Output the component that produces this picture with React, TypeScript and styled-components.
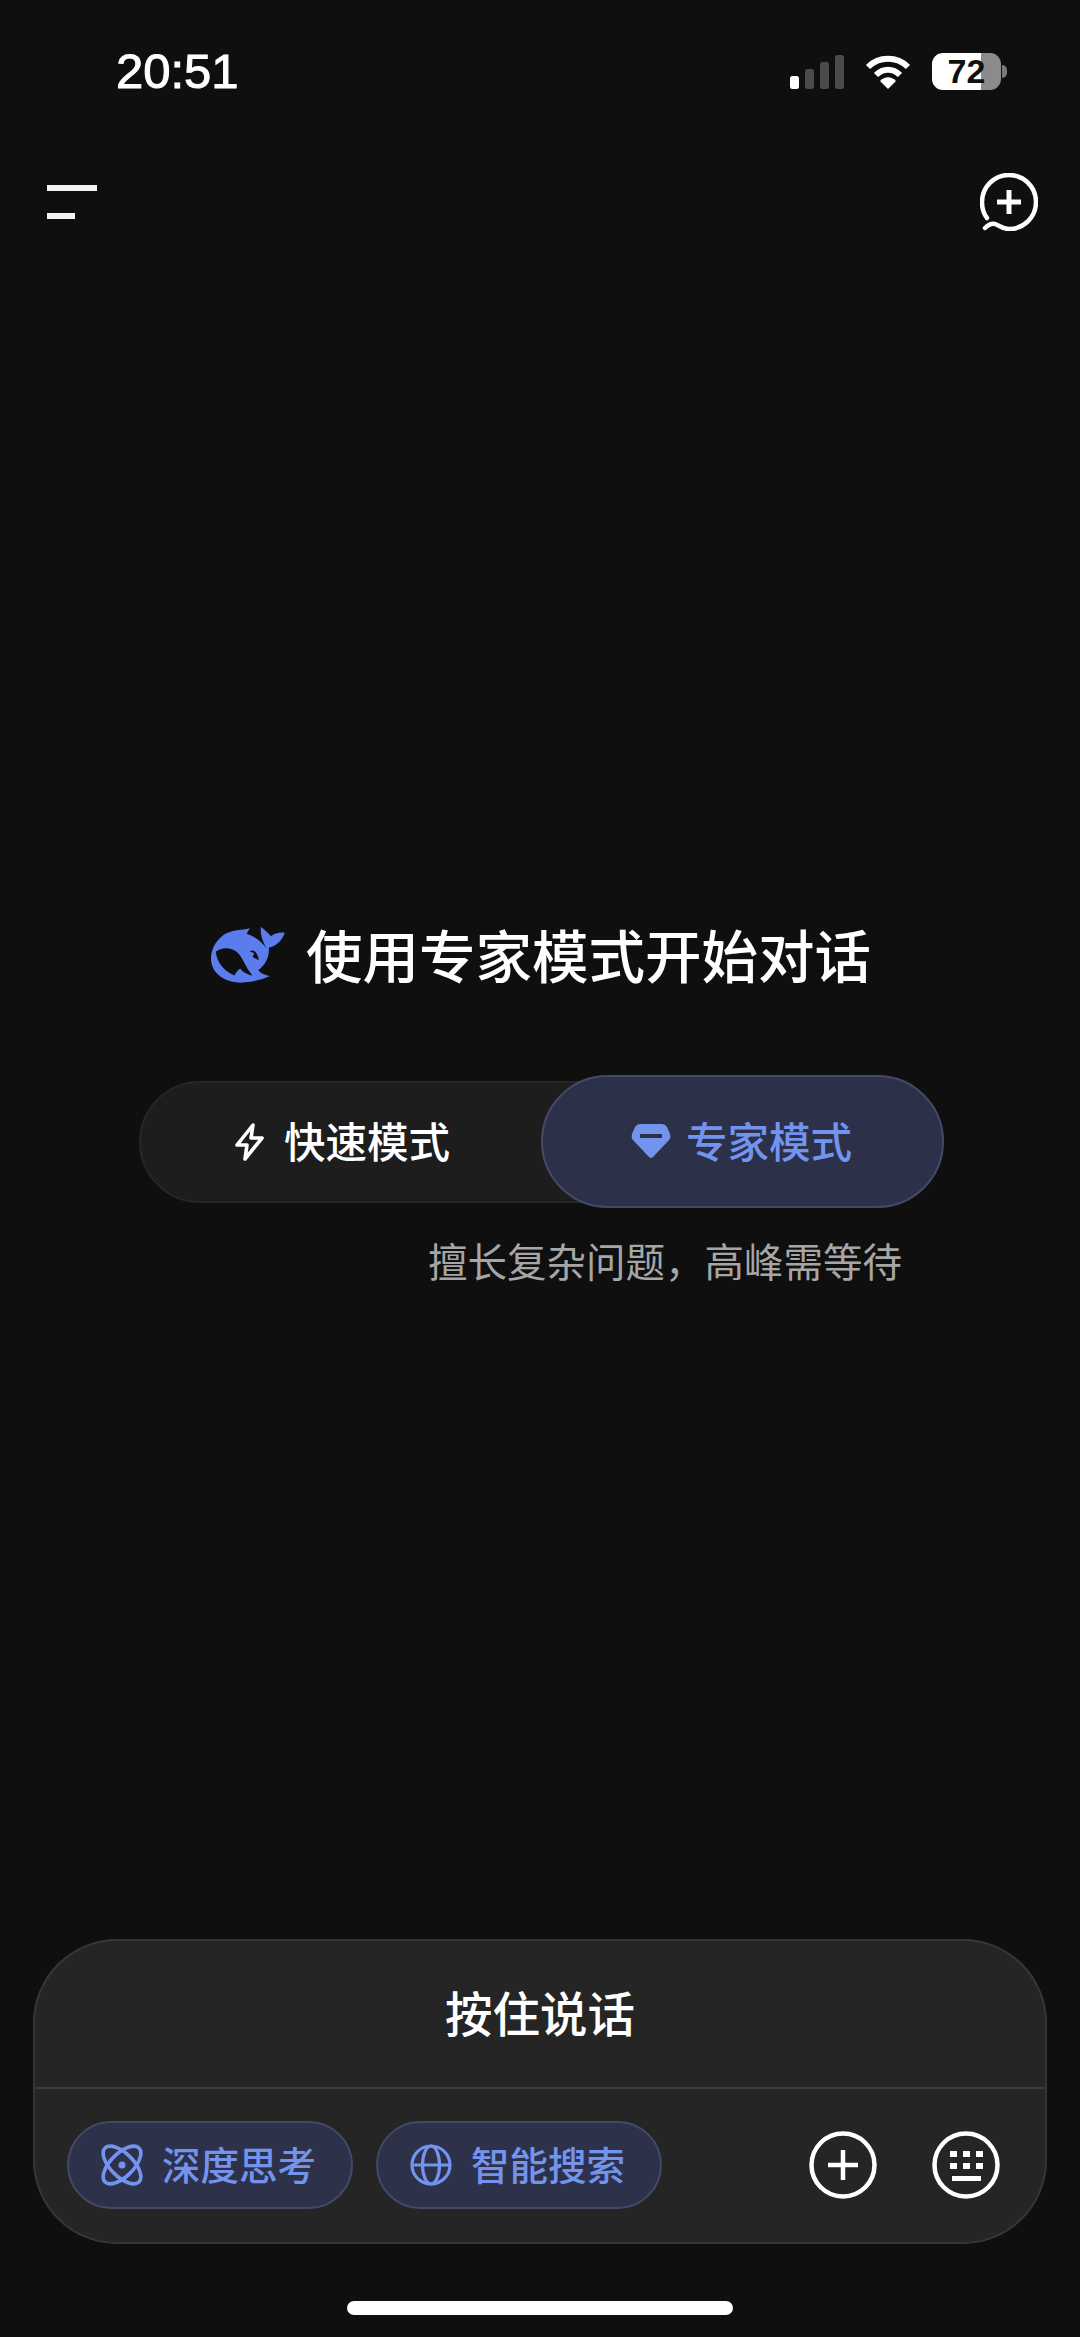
import { ReactNode } from 'react';
import styled, { createGlobalStyle } from 'styled-components';

const CJK = `'Noto Sans CJK SC', 'Noto Sans', sans-serif`;
const ACCENT = '#7394ee';

const GlobalStyle = createGlobalStyle`
  html, body {
    margin: 0;
    padding: 0;
    background: #0f0f10;
  }
`;

const SPage = styled.div`
  display: flex;
  flex-direction: column;
  height: 2337px;
  overflow: hidden;
  background: #0f0f10;
  font-family: ${CJK};
`;

const SStatusBar = styled.div`
  display: flex;
  align-items: center;
  justify-content: space-between;
  height: 37px;
  margin-top: 53px;
  padding: 0 73px 0 116px;
`;

const STime = styled.span`
  font-family: 'Liberation Sans', sans-serif;
  font-size: 49px;
  font-weight: 400;
  line-height: 37px;
  color: #fff;
  -webkit-text-stroke: 1px #fff;
`;

const SStatusIcons = styled.div`
  display: flex;
  align-items: center;
  gap: 21px;
`;

const SBatteryWrap = styled.div`
  display: flex;
  align-items: center;
  gap: 1px;
`;

const SBattery = styled.div`
  display: flex;
  align-items: center;
  justify-content: center;
  width: 69px;
  height: 37px;
  border-radius: 11px;
  background: linear-gradient(90deg, #fff 71%, #8b8b8b 71%);
  color: #111;
  font-family: 'Liberation Sans', sans-serif;
  font-size: 34px;
  font-weight: 700;
`;

const SBatteryNub = styled.div`
  width: 5px;
  height: 13px;
  border-radius: 0 6px 6px 0;
  background: #7a7a7a;
`;

const SNavBar = styled.div`
  display: flex;
  align-items: center;
  justify-content: space-between;
  margin-top: 83px;
  padding: 0 42px 0 47px;
`;

const SMenu = styled.div`
  display: flex;
  flex-direction: column;
  gap: 22px;
`;

const SMenuLine = styled.div<{ $width: number }>`
  width: ${({ $width }) => $width}px;
  height: 6px;
  background: #f4f4f4;
`;

const SMain = styled.main`
  display: flex;
  flex-direction: column;
  margin-top: 694px;
`;

const SLabel = styled.span`
  padding-bottom: 4px;
`;

const SHeading = styled.div`
  display: flex;
  align-items: center;
  gap: 20px;
  padding-left: 210px;
  font-size: 56.5px;
  font-weight: 500;
  line-height: 57px;
  color: #fff;
`;

const SSwitch = styled.div`
  display: flex;
  align-items: center;
  margin-top: 89px;
  padding-left: 139px;
`;

const SModeFast = styled.div`
  display: flex;
  align-items: center;
  gap: 19px;
  box-sizing: border-box;
  width: 520px;
  height: 122px;
  padding-left: 93px;
  border: 2px solid #262626;
  border-radius: 61px;
  background: #1d1d1e;
  color: #fff;
  font-size: 41.5px;
  font-weight: 500;
`;

const SModeExpert = styled.div`
  display: flex;
  align-items: center;
  gap: 15px;
  box-sizing: border-box;
  width: 403px;
  height: 133px;
  margin-left: -118px;
  padding-left: 88px;
  border: 2px solid #434a68;
  border-radius: 67px;
  background: #2c3149;
  color: ${ACCENT};
  font-size: 41.5px;
  font-weight: 500;
`;

const SHint = styled.div`
  margin-top: 29px;
  padding-right: 178px;
  text-align: right;
  font-size: 39.5px;
  line-height: 46px;
  color: #a6a6a6;
`;

const SComposer = styled.section`
  box-sizing: border-box;
  margin: auto 33px 0 33px;
  height: 305px;
  border: 2px solid #363636;
  border-radius: 84px;
  background: #252525;
`;

const SHoldToTalk = styled.div`
  display: flex;
  align-items: center;
  justify-content: center;
  height: 141px;
  padding-bottom: 5px;
  border-bottom: 2px solid #3c3c3c;
  font-size: 47.5px;
  font-weight: 500;
  color: #fff;
`;

const SToolbar = styled.div`
  display: flex;
  align-items: center;
  height: 152px;
  padding: 0 45px 0 32px;
`;

const SChips = styled.div`
  display: flex;
  gap: 23px;
  margin-right: auto;
`;

const SChip = styled.div`
  display: flex;
  align-items: center;
  gap: 19px;
  box-sizing: border-box;
  width: 286px;
  height: 88px;
  padding-left: 32px;
  border: 2px solid #434a68;
  border-radius: 44px;
  background: #2d324a;
  color: ${ACCENT};
  font-size: 38.5px;
  font-weight: 500;
`;

const SRoundButtons = styled.div`
  display: flex;
  gap: 55px;
`;

const SHomeBar = styled.div`
  align-self: center;
  width: 386px;
  height: 14px;
  margin: 57px 0 22px;
  border-radius: 7px;
  background: #fff;
`;

const Signal = () => (
  <svg width='54' height='34' viewBox='0 0 54 34'>
    <rect x='0' y='21' width='9' height='13' rx='2.5' fill='#fff' />
    <rect x='15' y='14' width='9' height='20' rx='2.5' fill='#4b4b4b' />
    <rect x='30' y='7' width='9' height='27' rx='2.5' fill='#4b4b4b' />
    <rect x='45' y='0' width='9' height='34' rx='2.5' fill='#4b4b4b' />
  </svg>
);

const Wifi = () => (
  <svg width='46' height='34' viewBox='0 0 46 34' fill='none' stroke='#fff' strokeWidth='6'>
    <path d='M3 12 C14 1 32 1 43 12' />
    <path d='M11 20 C18 13 28 13 35 20' />
    <path d='M23 34 L15 26 C20 21 26 21 31 26 Z' fill='#fff' stroke='none' />
  </svg>
);

const NewChat = () => (
  <svg width='58' height='58' viewBox='0 0 58 58' fill='none' stroke='#fff' strokeLinecap='round'>
    <path
      d='M7 45 C3 40 2 34 2 29 C2 14 14 2 29 2 C44 2 56 14 56 29 C56 44 44 56 29 56 C23 56 20 53 15 51 C11 50 8 52 5 55'
      strokeWidth='4.5'
    />
    <path d='M29 17 V41 M17 29 H41' strokeWidth='5' strokeLinecap='butt' />
  </svg>
);

const Whale = () => (
  <svg width='76' height='57' viewBox='45 40 228 172'>
    <path
      fill='#5b7cec'
      fillRule='evenodd'
      d='M165 44 C140 50 100 48 78 70 C52 92 40 130 52 160 C66 195 110 212 150 207 C180 204 205 198 225 188 C205 184 195 178 190 170 C212 155 224 130 222 102 C245 98 262 80 270 57 C255 55 240 58 228 68 C222 60 210 48 198 40 C195 65 205 85 215 105 C205 90 185 70 155 60 C158 54 162 49 165 44 Z M62 115 C80 100 110 100 128 118 C145 135 150 160 172 186 C160 184 145 178 135 165 C128 170 122 178 118 186 C90 175 65 150 62 115 Z M164 113 C172 108 182 112 186 122 C190 130 192 136 190 140 C184 134 176 134 172 128 C176 126 178 122 176 118 C172 116 168 116 164 113 Z'
    />
  </svg>
);

const Bolt = () => (
  <svg width='31' height='38' viewBox='0 0 31 38' fill='none' stroke='#fff' strokeWidth='3.6' strokeLinejoin='round'>
    <path d='M19 2 L3 22 H13 L11 36 L28 15 H17 Z' />
  </svg>
);

const Diamond = () => (
  <svg width='40' height='35' viewBox='0 0 40 35'>
    <path
      fill={ACCENT}
      d='M9 0 H31 Q34 0 36 3 L39 10 Q40 14 38 16 L22 33 Q20 35 18 33 L2 16 Q0 14 1 10 L4 3 Q6 0 9 0 Z'
    />
    <rect x='9' y='10' width='22' height='4' fill='#2c3149' />
  </svg>
);

const Atom = () => (
  <svg width='42' height='42' viewBox='0 0 42 42' fill='none' stroke={ACCENT} strokeWidth='3.6'>
    <ellipse cx='21' cy='21' rx='24' ry='11.5' transform='rotate(45 21 21)' />
    <ellipse cx='21' cy='21' rx='24' ry='11.5' transform='rotate(-45 21 21)' />
    <circle cx='21' cy='21' r='3.5' fill={ACCENT} stroke='none' />
  </svg>
);

const Globe = () => (
  <svg width='42' height='42' viewBox='0 0 42 42' fill='none' stroke={ACCENT} strokeWidth='3.2'>
    <circle cx='21' cy='21' r='19' />
    <ellipse cx='21' cy='21' rx='8.5' ry='19' />
    <path d='M2 21 H40' />
  </svg>
);

const PlusCircle = () => (
  <svg width='68' height='68' viewBox='0 0 68 68' fill='none' stroke='#fff'>
    <circle cx='34' cy='34' r='31.5' strokeWidth='4.5' />
    <path d='M34 19 V49 M19 34 H49' strokeWidth='4.5' />
  </svg>
);

const KeyboardCircle = () => (
  <svg width='68' height='68' viewBox='0 0 68 68' fill='none'>
    <circle cx='34' cy='34' r='31.5' stroke='#fff' strokeWidth='4.5' />
    <g fill='#fff'>
      <rect x='18' y='20' width='7' height='6' />
      <rect x='31' y='20' width='7' height='6' />
      <rect x='44' y='20' width='7' height='6' />
      <rect x='18' y='32' width='7' height='6' />
      <rect x='31' y='32' width='7' height='6' />
      <rect x='44' y='32' width='7' height='6' />
      <rect x='20' y='45' width='29' height='5' />
    </g>
  </svg>
);

const chips: { icon: ReactNode; label: string }[] = [
  { icon: <Atom />, label: '深度思考' },
  { icon: <Globe />, label: '智能搜索' },
];

const App = () => (
  <SPage>
    <GlobalStyle />
    <SStatusBar>
      <STime>20:51</STime>
      <SStatusIcons>
        <Signal />
        <Wifi />
        <SBatteryWrap>
          <SBattery>72</SBattery>
          <SBatteryNub />
        </SBatteryWrap>
      </SStatusIcons>
    </SStatusBar>
    <SNavBar>
      <SMenu>
        <SMenuLine $width={50} />
        <SMenuLine $width={28} />
      </SMenu>
      <NewChat />
    </SNavBar>
    <SMain>
      <SHeading>
        <Whale />
        <SLabel>使用专家模式开始对话</SLabel>
      </SHeading>
      <SSwitch>
        <SModeFast>
          <Bolt />
          <SLabel>快速模式</SLabel>
        </SModeFast>
        <SModeExpert>
          <Diamond />
          <SLabel>专家模式</SLabel>
        </SModeExpert>
      </SSwitch>
      <SHint>擅长复杂问题，高峰需等待</SHint>
    </SMain>
    <SComposer>
      <SHoldToTalk>按住说话</SHoldToTalk>
      <SToolbar>
        <SChips>
          {chips.map(chip => (
            <SChip key={chip.label}>
              {chip.icon}
              <SLabel>{chip.label}</SLabel>
            </SChip>
          ))}
        </SChips>
        <SRoundButtons>
          <PlusCircle />
          <KeyboardCircle />
        </SRoundButtons>
      </SToolbar>
    </SComposer>
    <SHomeBar />
  </SPage>
);

export default App;
